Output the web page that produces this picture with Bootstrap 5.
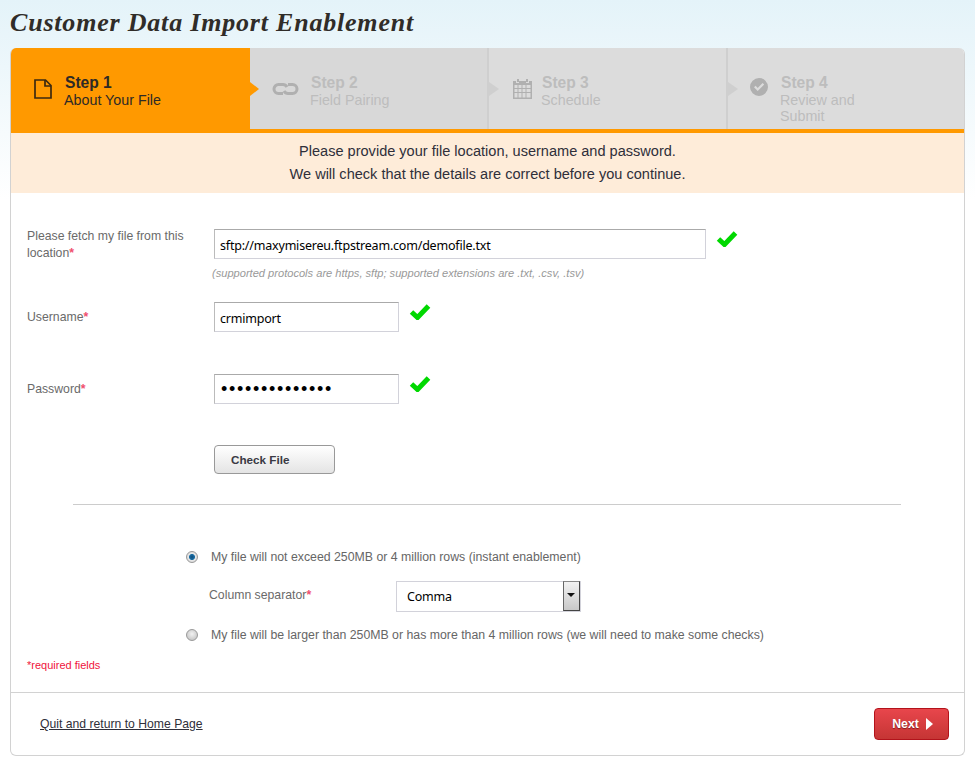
<!DOCTYPE html>
<html lang="en">
<head>
<meta charset="utf-8">
<title>Customer Data Import Enablement</title>
<link rel="stylesheet" href="https://cdn.jsdelivr.net/npm/bootstrap@5.3.0/dist/css/bootstrap.min.css">
<style>
html,body{height:100%}
body{font-family:"Liberation Sans",Arial,sans-serif;font-size:12.25px;color:#666;background:#fff linear-gradient(#e4f3f9,#fff 200px) no-repeat;overflow:hidden}
.shell{width:955px;margin-left:10px}
.page-title{font-family:"Liberation Serif","DejaVu Serif",serif;font-weight:700;font-style:italic;font-size:26px;line-height:26px;color:#302c28;padding-top:10px;height:48px;margin:0;letter-spacing:.8px}
.wizard{background:#fff;border:1px solid #d2d2d2;border-top:0;border-radius:6px;height:708px;overflow:hidden}
.steps{margin:0 -1px;height:85px;border-bottom:4px solid #f90;background:#dcdcdc;list-style:none;padding:0}
.step{position:relative;padding:26px 0 0 52px;color:#bdbdbd;font-size:14.3px;line-height:16px;border-left:2px solid #cfcfcf;width:239px;flex:none}
.step b{display:block;font-size:15.6px;line-height:18px;padding-left:1px}
.step svg{position:absolute}
.step::before{content:"";position:absolute;left:0;top:34px;border:7.5px solid transparent;border-left:10px solid #cfcfcf;border-right:0}
.step-on{background:#f90;color:#2e2a26;width:240px;border-left:0;padding-left:54px}
.step-on::before{display:none}
.step-on::after{content:"";position:absolute;right:-9px;top:34px;z-index:2;border:7.5px solid transparent;border-left:9px solid #f90;border-right:0}
.step-2{background:#d8d8d8;border-left:0;width:237px;padding-left:60px}
.step-2::before{display:none}
.step-3 svg,.step-4 svg{fill:#b0b0b0}
.step-4{width:239px}
.notice{background:#feecd9;color:#2f2f3a;font-size:14.55px;line-height:23px;height:60px;padding-top:7px;text-align:center}
.form-area{padding:36px 16px 0}
.f-row{display:flex}
.f-label{width:187px;flex:none;line-height:17px;margin-top:-1px;color:#6a6a6a}
.row-user .f-label,.row-pass .f-label{margin-top:7px}
.req{color:#f0506e;font-weight:700}
.f-input{border:1px solid #d2d2da;border-top-color:#aaa;border-left-color:#bbb;height:30px;padding:2px 5px 0;font-family:"Noto Sans",sans-serif;font-size:12.5px;letter-spacing:-.2px;color:#000;outline:0;background:#fff;border-radius:0;display:block}
.wide{width:492px}
.narrow{width:185px}
.tick{flex:none;margin:1px 0 0 10px}
.hint{margin:4px 0 0 185px;font-size:11.1px;line-height:15px;font-style:italic;color:#999}
.row-user{margin-top:21px}
.row-pass{margin-top:42px}
.f-input.secret{font-size:18px;letter-spacing:1.7px;font-family:"Liberation Sans",sans-serif;padding:0 5px 0 6px}
.check-btn{display:block;margin:41px 0 0 187px;width:121px;height:29px;border:1px solid #999;border-radius:4px;background:linear-gradient(#fff,#e4e4e4);font-weight:700;font-size:11.7px;color:#3a3a44;text-align:left;padding:0 0 0 16px;line-height:27px}
.divider{margin:30px 47px 0 46px;border:0;border-top:1px solid #ccc;opacity:1}
.choice{display:flex;align-items:center;margin-left:159px;color:#666;line-height:16px;font-size:12.3px}
.choice input{appearance:none;-webkit-appearance:none;width:12px;height:12px;margin:0 13px 0 0;border:1px solid #999;border-radius:50%;background:radial-gradient(circle at 50% 40%,#f2f2f2,#bbb);flex:none}
.choice input:checked{background:radial-gradient(circle,#0f4d7c 0,#1c6ea4 2.6px,#e8e8e8 3.4px,#ccc 100%)}
.choice-a{margin-top:44px}
.choice-b{margin-top:15px}
.sep-row{display:flex;align-items:center;margin:16px 0 0 182px}
.sep-label{width:187px;flex:none;color:#6a6a6a;padding-bottom:2px}
.sep-box{position:relative;width:185px;height:31px}
.sep-box select{appearance:none;-webkit-appearance:none;width:100%;height:100%;border:1px solid #d2d2da;border-radius:0;background:#fff;padding:2px 0 0 10px;font-family:"Noto Sans",sans-serif;font-size:12.5px;letter-spacing:-.2px;color:#000;outline:0}
.sep-arrow{position:absolute;right:1px;top:0;bottom:1px;width:17px;border:1px solid #444;border-top-color:#888;border-left-color:#666;background:linear-gradient(#f2f2f2,#c8c8c8);pointer-events:none}
.sep-arrow::after{content:"";position:absolute;left:3px;top:11px;border:4px solid transparent;border-top:4px solid #111;border-bottom:0}
.req-note{color:#f0123c;font-size:11px;line-height:14px;margin:15px 0 0}
.foot{margin-top:20px;border-top:1px solid #d2d2d2;padding:15px 15px 0 29px;display:flex;justify-content:space-between;align-items:center}
.quit{color:#2f2f3a;text-decoration:underline;font-size:12.2px}
.next-btn{width:75px;height:32px;border:1px solid #b3131b;border-radius:4px;background:linear-gradient(#e8464c,#c53534);color:#fff;font-weight:700;font-size:12.3px;padding:0 0 0 2px;display:flex;align-items:center;justify-content:center;gap:7px;text-shadow:0 1px 1px rgba(70,0,0,.6)}
</style>
</head>
<body>
<div class="shell">
  <h1 class="page-title">Customer Data Import Enablement</h1>
  <div class="wizard">
    <ul class="steps d-flex">
      <li class="step step-on">
        <svg style="left:24px;top:31px" width="18" height="20" viewBox="0 0 18 20" fill="none" stroke="#3d2a10" stroke-width="1.7"><path d="M1 1h10.500L17 6.500V19H1z"/><path d="M11 1v6h6"/></svg>
        <b>Step 1</b>About Your File
      </li>
      <li class="step step-2">
        <svg style="left:22px;top:34px" width="27" height="14" viewBox="0 0 27 14" fill="none" stroke="#b0b0b0" stroke-width="3"><path d="M15 5C14 3.200 13 2.500 11 2.500H6.500a4.500 4.500 0 0 0 0 9H11"/><path d="M12 9c1 1.800 2 2.500 4 2.500h4.500a4.500 4.500 0 0 0 0-9H16"/></svg>
        <b>Step 2</b>Field Pairing
      </li>
      <li class="step step-3">
        <svg style="left:24px;top:31px" width="19" height="20" viewBox="0 0 19 20"><path fill-rule="evenodd" d="M4 0h2v3H4zM13 0h2v3h-2zM0 2h3v2h3V2h7v2h3V2h3v18H0zM1.500 6v3h3V6zm4 0v3h3V6zm4 0v3h3V6zm4 0v3h4V6zM1.500 10v3h3v-3zm4 0v3h3v-3zm4 0v3h3v-3zm4 0v3h4v-3zM1.500 14v4.500h3V14zm4 0v4.500h3V14zm4 0v4.500h3V14zm4 0v4.500h4V14z"/></svg>
        <b>Step 3</b>Schedule
      </li>
      <li class="step step-4">
        <svg style="left:22px;top:30px" width="18" height="18" viewBox="0 0 18 18"><path fill-rule="evenodd" d="M9 0a9 9 0 1 1 0 18A9 9 0 0 1 9 0zM4 9.200l3.700 3.800L14.200 6.500 12.600 5 7.700 9.900 5.600 7.700z"/></svg>
        <b>Step 4</b>Review and<br>Submit
      </li>
    </ul>
    <div class="notice">Please provide your file location, username and password.<br>We will check that the details are correct before you continue.</div>
    <form class="form-area">
      <div class="f-row">
        <label class="f-label">Please fetch my file from this location<span class="req">*</span></label>
        <input class="f-input wide" type="text" value="sftp://maxymisereu.ftpstream.com/demofile.txt">
        <svg class="tick" width="22" height="17" viewBox="0 0 22 17"><path d="M2.500 9l6 5.500L19.500 3" fill="none" stroke="#00d800" stroke-width="5"/></svg>
      </div>
      <div class="hint">(supported protocols are https, sftp; supported extensions are .txt, .csv, .tsv)</div>
      <div class="f-row row-user">
        <label class="f-label">Username<span class="req">*</span></label>
        <input class="f-input narrow" type="text" value="crmimport">
        <svg class="tick" width="22" height="17" viewBox="0 0 22 17"><path d="M2.500 9l6 5.500L19.500 3" fill="none" stroke="#00d800" stroke-width="5"/></svg>
      </div>
      <div class="f-row row-pass">
        <label class="f-label">Password<span class="req">*</span></label>
        <input class="f-input narrow secret" type="password" value="abcdefghijklmn">
        <svg class="tick" width="22" height="17" viewBox="0 0 22 17"><path d="M2.500 9l6 5.500L19.500 3" fill="none" stroke="#00d800" stroke-width="5"/></svg>
      </div>
      <button type="button" class="check-btn">Check File</button>
      <hr class="divider">
      <label class="choice choice-a"><input type="radio" name="size" checked>My file will not exceed 250MB or 4 million rows (instant enablement)</label>
      <div class="sep-row">
        <span class="sep-label">Column separator<span class="req">*</span></span>
        <div class="sep-box"><select><option>Comma</option></select><span class="sep-arrow"></span></div>
      </div>
      <label class="choice choice-b"><input type="radio" name="size">My file will be larger than 250MB or has more than 4 million rows (we will need to make some checks)</label>
      <p class="req-note">*required fields</p>
    </form>
    <div class="foot">
      <a class="quit" href="#">Quit and return to Home Page</a>
      <button type="button" class="next-btn">Next <svg width="7" height="12" viewBox="0 0 7 12"><path d="M0 0l7 6-7 6z" fill="#fff"/></svg></button>
    </div>
  </div>
</div>
</body>
</html>
